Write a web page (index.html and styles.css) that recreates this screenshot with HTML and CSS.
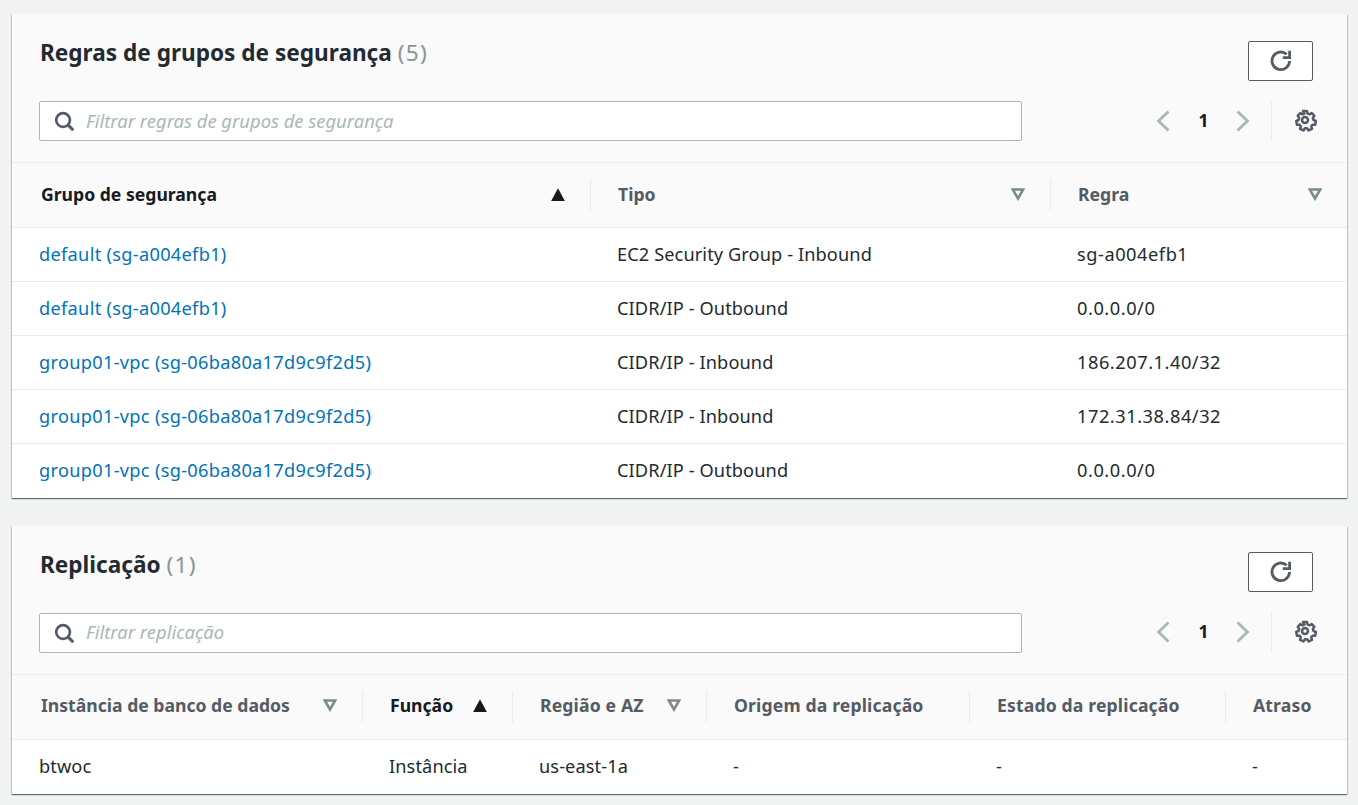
FILE: index.html

```html
<!DOCTYPE html>
<html lang="pt-BR">
<head>
    <meta charset="UTF-8">
    <title>Regras de grupos de segurança</title>
    <link rel="stylesheet" href="styles.css">
</head>
<body>
    <svg class="defs" width="0" height="0">
        <symbol id="i-refresh" viewBox="0 0 24 24"><path d="M20.600 12a8.800 8.800 0 1 1-2.900-6.700" fill="none" stroke="currentColor" stroke-width="2.800"/><path d="M20.600 1.800v6.800h-6.800" fill="none" stroke="currentColor" stroke-width="2.800"/></symbol>
        <symbol id="i-search" viewBox="0 0 22 22"><circle cx="9.500" cy="9.500" r="7.200" fill="none" stroke="currentColor" stroke-width="2.800"/><path d="M14.600 14.600l5.600 5.600" fill="none" stroke="currentColor" stroke-width="3.200"/></symbol>
        <symbol id="i-prev" viewBox="0 0 14 22"><path d="M12.500 1.500L2.500 11l10 9.500" fill="none" stroke="currentColor" stroke-width="2.800"/></symbol>
        <symbol id="i-next" viewBox="0 0 14 22"><path d="M1.500 1.500L11.500 11l-10 9.500" fill="none" stroke="currentColor" stroke-width="2.800"/></symbol>
        <symbol id="i-gear" viewBox="0 0 24 24"><path d="M9.700 1.800h4.600l.6 3 2.200 1 2.600-1.600 3 3.300-1.700 2.500.7 2.200 2.800 1-.9 4.400-3-.1-1.400 1.900.9 2.900-4 1.900-1.700-2.500h-2.400l-1.700 2.500-4-1.900.9-2.900-1.400-1.900-3 .1-.9-4.400 2.800-1 .7-2.200-1.700-2.500 3-3.300 2.600 1.600 2.200-1z" transform="translate(1.500 1.300) scale(.875)" fill="none" stroke="currentColor" stroke-width="2.800" stroke-linejoin="round"/><circle cx="12" cy="12" r="3" fill="none" stroke="currentColor" stroke-width="2.500"/></symbol>
        <symbol id="i-down" viewBox="0 0 14 13"><path d="M1.800 1.500h10.400L7 10.500z" fill="none" stroke="currentColor" stroke-width="2.600"/></symbol>
    </svg>

    <section class="card">
        <div class="card-head">
            <div class="title-row">
                <h2>Regras de grupos de segurança <span class="count">(5)</span></h2>
                <button class="refresh"><svg><use href="#i-refresh"/></svg></button>
            </div>
            <div class="filter-row">
                <div class="filter">
                    <svg class="search"><use href="#i-search"/></svg>
                    <span class="placeholder">Filtrar regras de grupos de segurança</span>
                </div>
                <div class="pager">
                    <svg class="chev"><use href="#i-prev"/></svg>
                    <span class="page">1</span>
                    <svg class="chev"><use href="#i-next"/></svg>
                    <span class="pager-sep"></span>
                    <svg class="gear"><use href="#i-gear"/></svg>
                </div>
            </div>
        </div>
        <table class="rules">
            <colgroup><col class="r1"><col class="r2"><col class="r3"></colgroup>
            <thead>
                <tr>
                    <th class="sorted"><div class="th-in">Grupo de segurança<span class="tri up"></span></div></th>
                    <th><div class="th-in sep">Tipo<svg class="tri"><use href="#i-down"/></svg></div></th>
                    <th><div class="th-in sep">Regra<svg class="tri"><use href="#i-down"/></svg></div></th>
                </tr>
            </thead>
            <tbody>
                <tr><td><a href="#">default (sg-a004efb1)</a></td><td>EC2 Security Group - Inbound</td><td>sg-a004efb1</td></tr>
                <tr><td><a href="#">default (sg-a004efb1)</a></td><td>CIDR/IP - Outbound</td><td>0.0.0.0/0</td></tr>
                <tr><td><a href="#">group01-vpc (sg-06ba80a17d9c9f2d5)</a></td><td>CIDR/IP - Inbound</td><td>186.207.1.40/32</td></tr>
                <tr><td><a href="#">group01-vpc (sg-06ba80a17d9c9f2d5)</a></td><td>CIDR/IP - Inbound</td><td>172.31.38.84/32</td></tr>
                <tr><td><a href="#">group01-vpc (sg-06ba80a17d9c9f2d5)</a></td><td>CIDR/IP - Outbound</td><td>0.0.0.0/0</td></tr>
            </tbody>
        </table>
    </section>

    <section class="card">
        <div class="card-head">
            <div class="title-row">
                <h2>Replicação <span class="count">(1)</span></h2>
                <button class="refresh"><svg><use href="#i-refresh"/></svg></button>
            </div>
            <div class="filter-row">
                <div class="filter">
                    <svg class="search"><use href="#i-search"/></svg>
                    <span class="placeholder">Filtrar replicação</span>
                </div>
                <div class="pager">
                    <svg class="chev"><use href="#i-prev"/></svg>
                    <span class="page">1</span>
                    <svg class="chev"><use href="#i-next"/></svg>
                    <span class="pager-sep"></span>
                    <svg class="gear"><use href="#i-gear"/></svg>
                </div>
            </div>
        </div>
        <table class="replicas">
            <colgroup><col class="c1"><col class="c2"><col class="c3"><col class="c4"><col class="c5"><col class="c6"></colgroup>
            <thead>
                <tr>
                    <th><div class="th-in">Instância de banco de dados<svg class="tri"><use href="#i-down"/></svg></div></th>
                    <th class="sorted"><div class="th-in sep">Função<span class="tri up"></span></div></th>
                    <th><div class="th-in sep">Região e AZ<svg class="tri"><use href="#i-down"/></svg></div></th>
                    <th><div class="th-in sep">Origem da replicação</div></th>
                    <th><div class="th-in sep">Estado da replicação</div></th>
                    <th><div class="th-in sep">Atraso</div></th>
                </tr>
            </thead>
            <tbody>
                <tr><td>btwoc</td><td>Instância</td><td>us-east-1a</td><td>-</td><td>-</td><td>-</td></tr>
            </tbody>
        </table>
    </section>
</body>
</html>
```

FILE: styles.css

```css
* {
    box-sizing: border-box;
}
body {
    margin: 0;
    padding: 14px 11px 10px 12px;
    background-color: #f2f3f3;
    color: #16191f;
    font-family: "Noto Sans", Arial, sans-serif;
    font-size: 17.5px;
}
.defs {
    position: absolute;
}
.card {
    background-color: #fff;
    box-shadow: 0 1px 1px 0 rgba(0, 28, 36, 0.45), 1px 1px 1px 0 rgba(0, 28, 36, 0.15), -1px 1px 1px 0 rgba(0, 28, 36, 0.15);
    margin-bottom: 28px;
}
.card:last-child {
    margin-bottom: 0;
}
.card-head {
    background-color: #fafafa;
    border-bottom: 1px solid #eaeded;
    padding: 27px 34px 21px 27px;
}
.title-row {
    display: flex;
    justify-content: space-between;
    height: 40px;
}
h2 {
    margin: -4px 0 0 1px;
    font-size: 22.6px;
    line-height: 32px;
    font-weight: 700;
    color: #232a31;
}
.count {
    color: #879596;
    font-weight: 400;
    letter-spacing: 1.3px;
}
.refresh {
    width: 65px;
    height: 40px;
    padding: 0;
    background-color: #fff;
    border: 1px solid #545b64;
    border-radius: 2px;
    color: #545b64;
    display: flex;
    align-items: center;
    justify-content: center;
}
.refresh svg {
    width: 24px;
    height: 24px;
    margin-top: -1px;
}
.filter-row {
    display: flex;
    justify-content: space-between;
    margin-top: 20px;
    height: 40px;
}
.filter {
    width: 983px;
    height: 40px;
    display: flex;
    align-items: center;
    background-color: #fff;
    border: 1px solid #aab7b8;
    border-radius: 2px;
    padding-left: 14px;
}
.search {
    width: 21px;
    height: 21px;
    color: #545b64;
    margin-right: 11px;
}
.placeholder {
    color: #aab7b8;
    font-style: italic;
    font-size: 18.4px;
    margin-top: -1px;
}
.pager {
    display: flex;
    align-items: center;
    margin-right: -4px;
}
.chev {
    width: 14px;
    height: 22px;
    color: #aab7b8;
}
.page {
    width: 66px;
    padding-left: 1px;
    text-align: center;
    font-weight: 700;
    font-size: 17.5px;
    margin-top: -2px;
}
.pager-sep {
    width: 1px;
    height: 40px;
    background-color: #eaeded;
    margin: 0 21px 0 21px;
}
.gear {
    width: 24px;
    height: 24px;
    color: #545b64;
    margin-top: -2px;
}
/* second card sits half a pixel higher in the original */
.card + .card h2 {
    margin-top: -4px;
}
.card + .card .refresh {
    margin-top: -1px;
}
.card + .card .placeholder {
    margin-top: -3px;
}
.card + .card .pager {
    margin-top: -2px;
}
.card + .card .th-in {
    padding-bottom: 4px;
}
table {
    width: 100%;
    border-collapse: collapse;
    table-layout: fixed;
}
th {
    height: 64px;
    padding: 0;
    background-color: #fafafa;
    border-bottom: 1px solid #eaeded;
    color: #545b64;
    font-size: 17.6px;
    font-weight: 700;
    text-align: left;
}
th.sorted {
    color: #16191f;
}
.replicas th:nth-child(n+3) {
    letter-spacing: 0.15px;
}
.th-in {
    display: flex;
    align-items: center;
    justify-content: space-between;
    height: 32px;
    padding: 0 25px 2px 29px;
}
.th-in.sep {
    padding-left: 27px;
    border-left: 1px solid #eaeded;
}
.tri {
    width: 14px;
    height: 13px;
    flex: none;
    color: #7b8a8b;
    margin-top: 2px;
}
.tri.up {
    background-color: #16191f;
    clip-path: polygon(50% 0, 100% 100%, 0 100%);
}
td {
    height: 54px;
    padding: 0 0 0 27px;
    border-bottom: 1px solid #eaeded;
    font-size: 18.2px;
    letter-spacing: 0.1px;
    color: #232a31;
}
.rules td:nth-child(3) {
    letter-spacing: 0.55px;
}
tr:last-child td {
    height: 55px;
    padding-bottom: 2px;
    border-bottom: none;
}
a {
    color: #0073bb;
    text-decoration: none;
    letter-spacing: 0.3px;
}
.r1 { width: 578px; }
.r2 { width: 460px; }
.c1 { width: 350px; }
.c2 { width: 150px; }
.c3 { width: 194px; }
.c4 { width: 263px; }
.c5 { width: 256px; }
```
